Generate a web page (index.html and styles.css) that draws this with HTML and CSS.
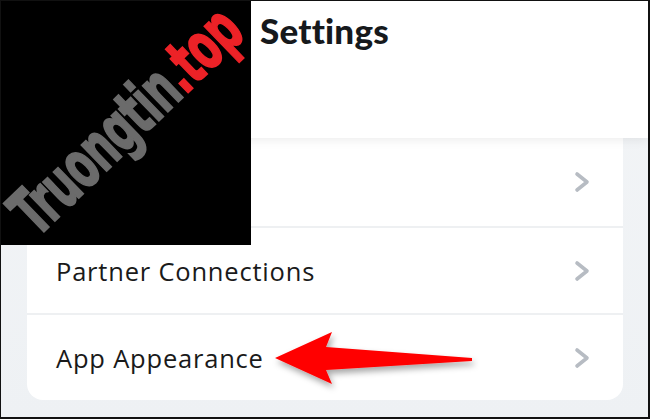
FILE: index.html
```html
<!DOCTYPE html>
<html>
<head>
    <meta name="viewport" content="width=device-width, initial-scale=1">
    <link rel="stylesheet" href="styles.css">
</head>
<body>
    <div class="frame">
        <header class="top-bar">
            <h1>Settings</h1>
        </header>

        <main class="content">
            <div class="card">
                <div class="row">
                    <span class="row-label"></span>
                    <svg class="chevron" viewBox="0 0 16 22"><path d="M3 3 L13 11 L3 19"/></svg>
                </div>
                <div class="row">
                    <span class="row-label">Partner Connections</span>
                    <svg class="chevron" viewBox="0 0 16 22"><path d="M3 3 L13 11 L3 19"/></svg>
                </div>
                <div class="row">
                    <span class="row-label">App Appearance</span>
                    <svg class="chevron" viewBox="0 0 16 22"><path d="M3 3 L13 11 L3 19"/></svg>
                </div>
            </div>
        </main>

        <!-- flecha roja sobre la captura -->
        <svg class="arrow" viewBox="0 0 650 419">
            <defs>
                <filter id="shadow" x="-10%" y="-30%" width="130%" height="180%">
                    <feDropShadow dx="2" dy="4" stdDeviation="3" flood-color="#000" flood-opacity="0.35"/>
                </filter>
            </defs>
            <path d="M275 358 L332 332 L326 347 L472 358 L472 361 L326 370 L332 384 Z" fill="#ff0000" filter="url(#shadow)"/>
        </svg>

        <!-- marca de agua -->
        <div class="watermark">
            <span class="wm-text">Truongtin<span class="wm-red">.top</span></span>
        </div>
    </div>
</body>
</html>
```

FILE: styles.css
```css
body {
    margin: 0;
    background-color: #111;
    font-family: "Open Sans", Lato, sans-serif;
}

.frame {
    position: relative;
    width: 650px;
    height: 419px;
    box-sizing: border-box;
    border-top: 1px solid #111;
    border-left: 1px solid #111;
    border-right: 2px solid #111;
    border-bottom: 2px solid #111;
    background: linear-gradient(to bottom, #f3f5f7, #eef1f4);
    overflow: hidden;
    display: flex;
    flex-direction: column;
}

.top-bar {
    position: relative;
    z-index: 2;
    height: 137px;
    flex-shrink: 0;
    background-color: #fff;
    box-shadow: 0 2px 10px rgba(0, 0, 0, 0.08);
    padding-left: 259px;
}

.top-bar h1 {
    margin: 0;
    padding-top: 8px;
    font-family: Lato, sans-serif;
    font-size: 35px;
    font-weight: 900;
    color: #16191c;
    letter-spacing: 0.2px;
}

.content {
    flex: 1;
    padding: 0 25px 0 26px;
}

.card {
    background-color: #fff;
    border-radius: 0 0 16px 16px;
    overflow: hidden;
}

.row {
    display: flex;
    align-items: center;
    justify-content: space-between;
    height: 85px;
    padding: 0 33px 0 29px;
    border-bottom: 2px solid #eef0f2;
}

.row:first-child {
    height: 88px;
}

.row:last-child {
    border-bottom: none;
}

.row-label {
    font-size: 25.5px;
    color: #1a1a1a;
    letter-spacing: 0.8px;
}

.chevron {
    width: 16px;
    height: 22px;
    fill: none;
    stroke: #b7bcc3;
    stroke-width: 3.6;
    stroke-linecap: round;
    stroke-linejoin: round;
}

.arrow {
    position: absolute;
    top: -1px;
    left: -1px;
    width: 650px;
    height: 419px;
    z-index: 3;
}

.watermark {
    position: absolute;
    top: -1px;
    left: -1px;
    width: 251px;
    height: 245px;
    background-color: #000;
    z-index: 4;
    overflow: hidden;
}

.wm-text {
    position: absolute;
    left: 126px;
    top: 121px;
    transform: translate(-50%, -50%) rotate(-44deg) scaleX(0.59);
    font-family: "DejaVu Sans", sans-serif;
    font-weight: bold;
    font-size: 66px;
    color: #6b6b6b;
    -webkit-text-stroke: 2px #6b6b6b;
    white-space: nowrap;
    letter-spacing: -1px;
}

.wm-red {
    color: #ec2227;
    -webkit-text-stroke: 2px #ec2227;
}
```
